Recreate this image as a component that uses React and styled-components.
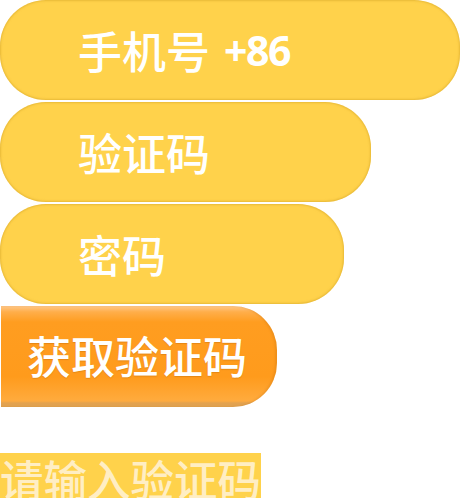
import React from 'react';
import styled, { createGlobalStyle } from 'styled-components';

const GlobalStyle = createGlobalStyle`
  body {
    margin: 0;
    background: #ffffff;
    font-family: "Noto Sans CJK SC", "Noto Sans", sans-serif;
  }
`;

const Form = styled.div`
  display: flex;
  flex-direction: column;
  align-items: flex-start;
`;

const Field = styled.div`
  box-sizing: border-box;
  width: ${props => props.width}px;
  height: 100px;
  margin-bottom: 2px;
  padding-left: 78px;
  display: flex;
  align-items: center;
  background: #ffd24b;
  border-radius: 46px;
  box-shadow: inset 0 0 2px 1px rgba(214, 165, 40, 0.55);
  color: #ffffff;
  font-size: 44px;
  font-weight: 500;
  white-space: nowrap;
`;

const AreaCode = styled.span`
  margin-left: 14px;
  font-family: "Open Sans", "Noto Sans", sans-serif;
  font-weight: 700;
  font-size: 41px;
  letter-spacing: -1.5px;
`;

const CodeButton = styled.button`
  box-sizing: border-box;
  width: 276px;
  height: 101px;
  margin: 0 0 0 1px;
  padding: 0 0 4px 26px;
  display: flex;
  align-items: center;
  border: none;
  border-radius: 0 44px 44px 0;
  background: linear-gradient(
    to bottom,
    #ffc98a 0px,
    #ffae4a 6px,
    #ff9d20 16px,
    #ff9b1c 70%,
    #ffab3e 94%,
    #e3a24f 96%,
    #e0a250 100%
  );
  box-shadow: inset -2px 0 2px rgba(190, 110, 20, 0.25);
  color: #ffffff;
  font-family: inherit;
  font-size: 44px;
  font-weight: 500;
  text-shadow: 0 1px 1px rgba(170, 90, 0, 0.3);
  cursor: pointer;
  white-space: nowrap;
`;

const Hint = styled.div`
  margin-top: 46px;
  line-height: 1;
`;

const HintText = styled.span`
  display: inline-block;
  padding-top: 2px;
  height: 50px;
  background: #ffd24b;
  color: #ffeec4;
  font-size: 43.5px;
  font-weight: 500;
  line-height: 48px;
`;

export default function App() {
  return (
    <>
      <GlobalStyle />
      <Form>
        <Field width={460}>
          手机号<AreaCode>+86</AreaCode>
        </Field>
        <Field width={371}>验证码</Field>
        <Field width={344}>密码</Field>
        <CodeButton>获取验证码</CodeButton>
        <Hint>
          <HintText>请输入验证码</HintText>
        </Hint>
      </Form>
    </>
  );
}
